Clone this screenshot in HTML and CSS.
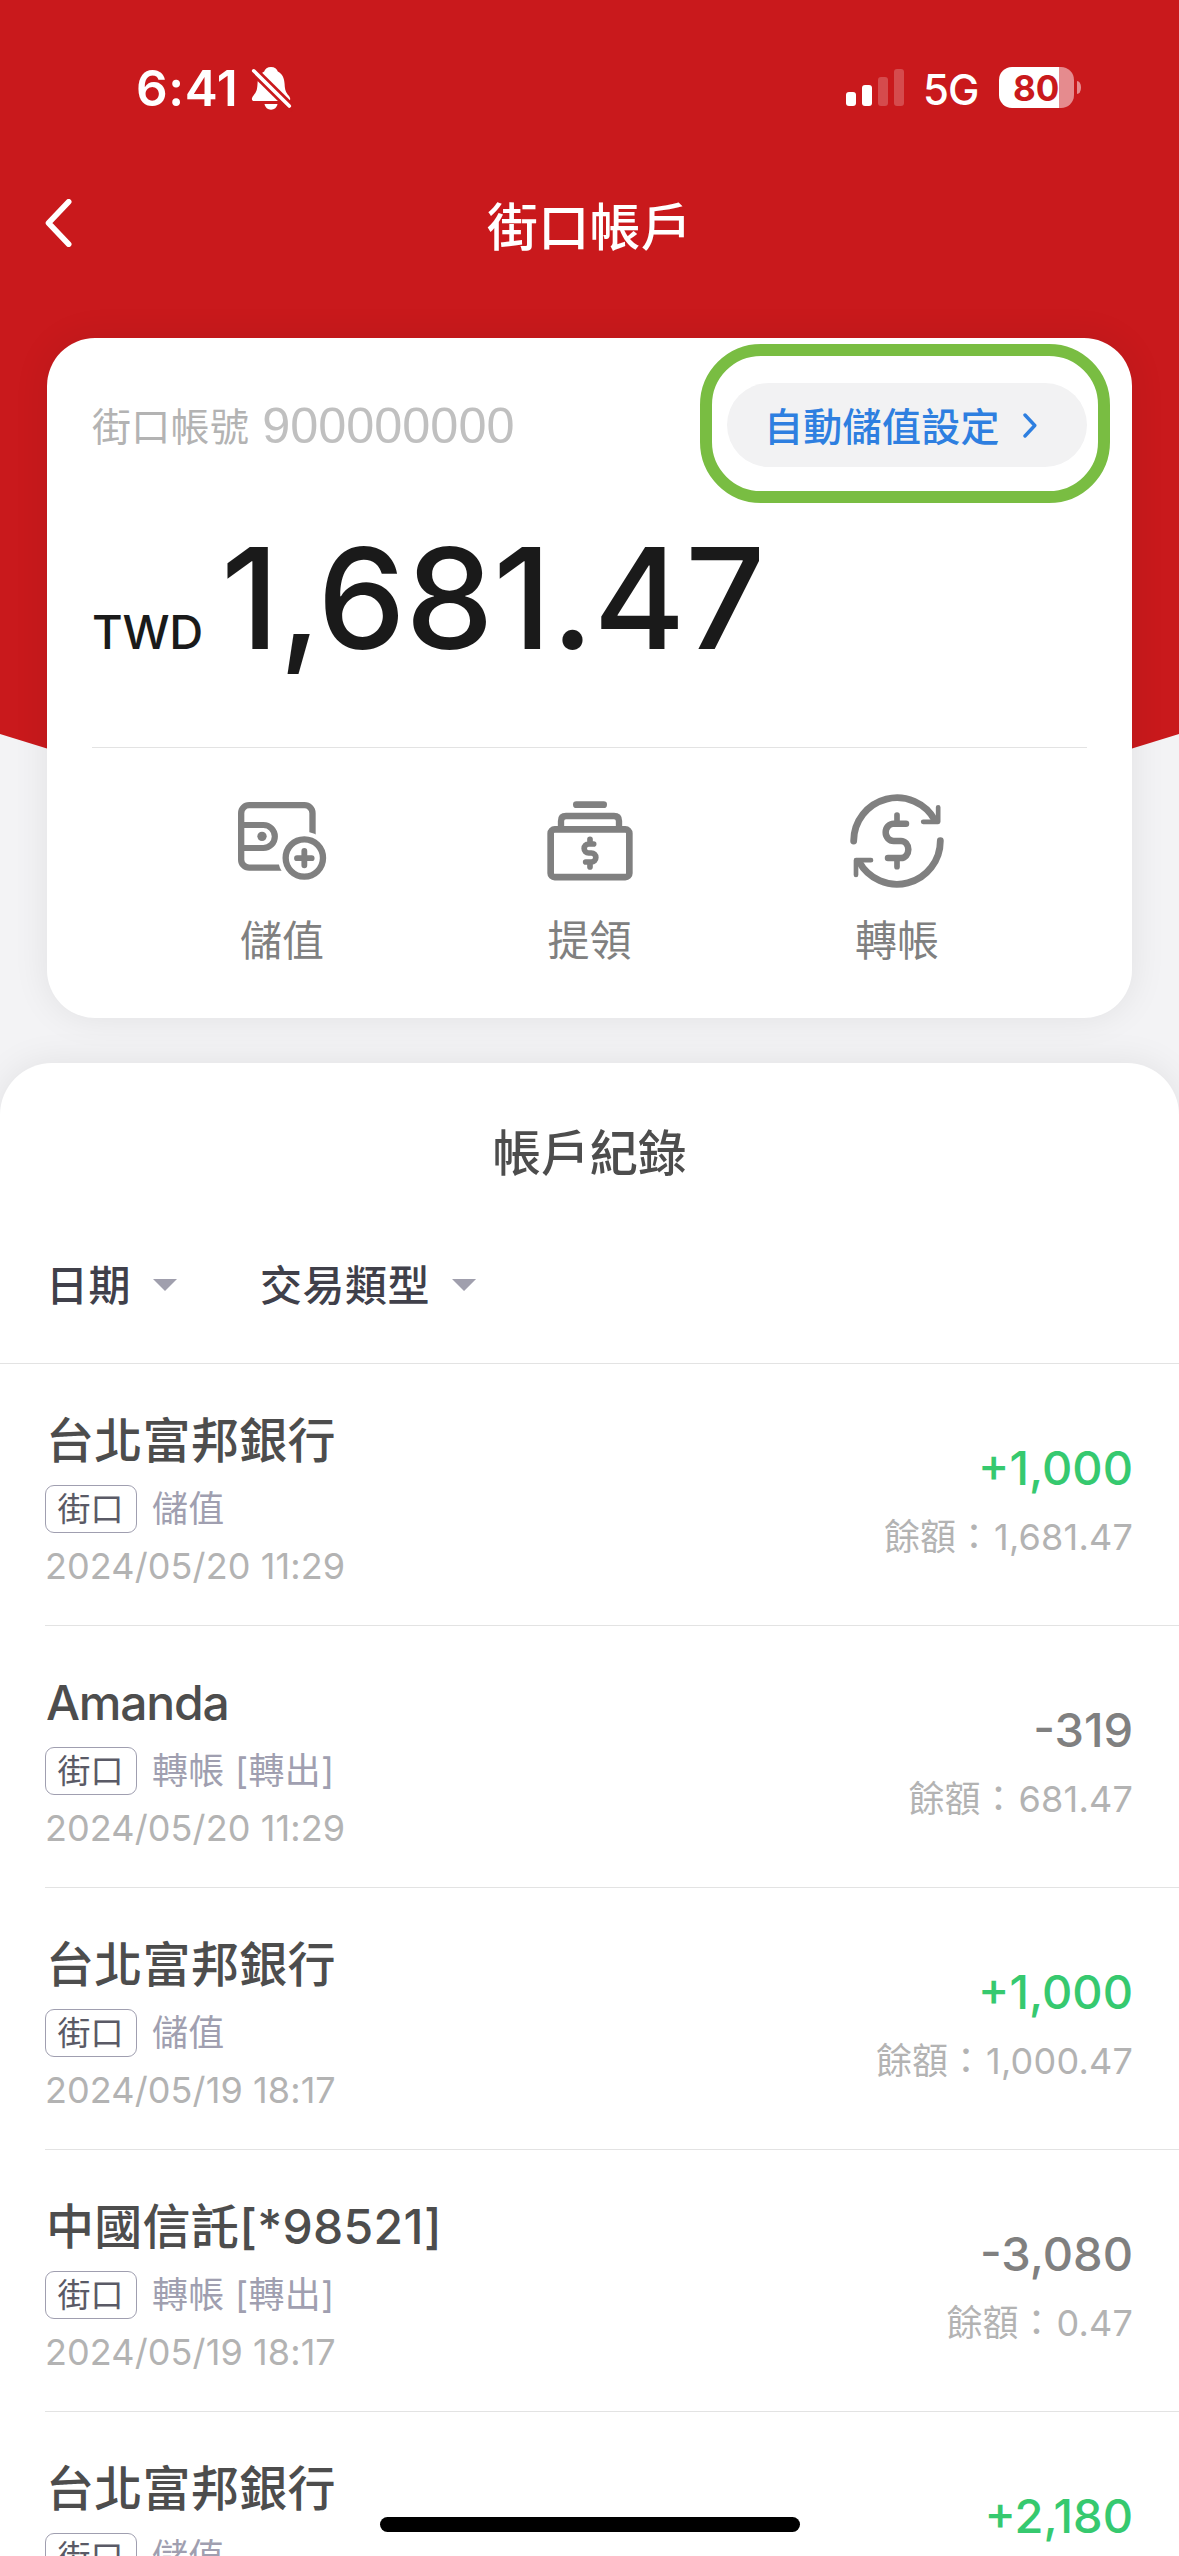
FILE: index.html
```html
<!DOCTYPE html>
<html lang="zh-Hant">
<head>
<meta charset="utf-8">
<title>街口帳戶</title>
<link rel="stylesheet" href="styles.css">
</head>
<body>
<div class="screen">
  <div class="hero"></div>

  <header class="status">
    <div class="status-left">
      <span class="time">6:41</span>
      <svg class="bell" viewBox="250 65 43 47" width="43" height="47">
        <path fill="#fff" d="M271 67c-3.600 0-6 2-6.800 4.600C259.500 74 257.800 78.500 257.500 84c-.3 6.500-1.500 8.500-4 11.500-1.300 1.600-1.700 2.700-1.600 3.700.1 1.200 1.100 1.900 2.600 1.900h33.100c1.500 0 2.500-.7 2.600-1.900.1-1-.3-2.100-1.600-3.700-2.500-3-3.700-5-4-11.500-.3-5.500-2-10-6.800-12.400C277 69 274.600 67 271 67z"/>
        <path fill="#fff" d="M264.500 104h13c-.6 3.500-3.200 5.700-6.500 5.700s-5.900-2.200-6.500-5.700z"/>
        <path stroke="#c9191c" stroke-width="9" d="M250 67.200 293 109.600"/>
        <path stroke="#fff" stroke-width="3.600" stroke-linecap="round" d="M253.700 70.800 289.300 106"/>
      </svg>
    </div>
    <div class="status-right">
      <div class="signal"><i class="bar b1"></i><i class="bar b2"></i><i class="bar b3"></i><i class="bar b4"></i></div>
      <span class="network">5G</span>
      <div class="battery"><span>80</span></div>
      <i class="battery-tip"></i>
    </div>
  </header>

  <nav class="navbar">
    <svg class="back" viewBox="45 199 27 48" width="27" height="48"><path d="M68.700 201.800 48.500 223 68.700 244.200" fill="none" stroke="#fff" stroke-width="5.600" stroke-linecap="round" stroke-linejoin="round"/></svg>
    <h1>街口帳戶</h1>
  </nav>

  <section class="card">
    <div class="account">
      <span class="account-label">街口帳號</span>
      <span class="account-number">900000000</span>
      <a class="auto">
        <span>自動儲值設定</span>
        <svg viewBox="0 0 14 25" width="14" height="25"><path d="M2 2 11.800 12.500 2 23" fill="none" stroke="#2e7fe0" stroke-width="3.400" stroke-linecap="round" stroke-linejoin="round"/></svg>
      </a>
    </div>
    <div class="balance"><span class="currency">TWD</span><span class="amount">1,681.47</span></div>
    <div class="actions">
      <div class="action">
        <svg viewBox="156 93 300 300" width="100" height="100" fill="none" stroke="#808080" stroke-linecap="round">
          <rect x="183.500" y="135.500" width="214" height="187.500" rx="24" stroke-width="19"/>
          <circle cx="373" cy="294" r="79" fill="#fff" stroke="none"/>
          <path d="M186 195H250a34.500 34.500 0 0 1 0 69H186" stroke-width="18.500"/>
          <circle cx="246" cy="229" r="14" fill="#808080" stroke="none"/>
          <circle cx="373" cy="294" r="56" stroke-width="19"/>
          <path d="M351 294.500H395M373 273V316" stroke-width="17.500"/>
        </svg>
        <span>儲值</span>
      </div>
      <div class="action">
        <svg viewBox="1080 93 300 300" width="100" height="100" fill="none" stroke="#808080" stroke-linecap="round" stroke-linejoin="round">
          <path d="M1189 134H1271" stroke-width="20"/>
          <path d="M1143 203V183q0-15 15-15H1302q15 0 15 15V203" stroke-width="19"/>
          <rect x="1112" y="208" width="236" height="143.500" rx="12" stroke-width="20"/>
          <path d="M1241 252H1226a13.500 13.500 0 0 0 0 27H1234a13.500 13.500 0 0 1 0 27H1217M1230 238V252M1230 306V321" stroke-width="17"/>
        </svg>
        <span>提領</span>
      </div>
      <div class="action">
        <svg viewBox="0 0 300 300" width="100" height="100" fill="none" stroke="#808080" stroke-linecap="round" stroke-linejoin="round">
          <path d="M20 150A130 130.500 0 0 1 264 88M280 149A130 130.500 0 0 1 36 212" stroke-width="20.500"/>
          <path d="M273.500 49V92.500H228.500M27 252V207.500H72" stroke-width="14"/>
          <path d="M177 98H140a24 26 0 0 0 0 52H162a22 25.500 0 0 1 0 51H123" stroke-width="19.500"/>
          <path d="M150 72V96M150 203V227" stroke-width="17"/>
        </svg>
        <span>轉帳</span>
      </div>
    </div>
    <div class="highlight"></div>
  </section>

  <main class="history">
    <h2>帳戶紀錄</h2>
    <div class="filters">
      <div class="filter"><span>日期</span><i class="caret"></i></div>
      <div class="filter"><span>交易類型</span><i class="caret"></i></div>
    </div>
    <ul class="records">
      <li class="record">
        <div class="info"><div class="name">台北富邦銀行</div><div class="kind"><span class="tag">街口</span><span>儲值</span></div><div class="date">2024/05/20 11:29</div></div>
        <div class="figures"><div class="change plus">+1,000</div><div class="rest">餘額：<span>1,681.47</span></div></div>
      </li>
      <li class="record">
        <div class="info"><div class="name latin">Amanda</div><div class="kind"><span class="tag">街口</span><span>轉帳 [轉出]</span></div><div class="date">2024/05/20 11:29</div></div>
        <div class="figures"><div class="change">-319</div><div class="rest">餘額：<span>681.47</span></div></div>
      </li>
      <li class="record">
        <div class="info"><div class="name">台北富邦銀行</div><div class="kind"><span class="tag">街口</span><span>儲值</span></div><div class="date">2024/05/19 18:17</div></div>
        <div class="figures"><div class="change plus">+1,000</div><div class="rest">餘額：<span>1,000.47</span></div></div>
      </li>
      <li class="record">
        <div class="info"><div class="name">中國信託[*98521]</div><div class="kind"><span class="tag">街口</span><span>轉帳 [轉出]</span></div><div class="date">2024/05/19 18:17</div></div>
        <div class="figures"><div class="change">-3,080</div><div class="rest">餘額：<span>0.47</span></div></div>
      </li>
      <li class="record">
        <div class="info"><div class="name">台北富邦銀行</div><div class="kind"><span class="tag">街口</span><span>儲值</span></div></div>
        <div class="figures"><div class="change plus">+2,180</div></div>
      </li>
    </ul>
  </main>
  <div class="home-indicator"></div>
</div>
</body>
</html>
```
FILE: styles.css
```css
* { box-sizing: border-box; margin: 0; padding: 0; }

body {
  width: 1179px;
  height: 2556px;
  overflow: hidden;
  background: #f3f3f5;
  font-family: Inter, "Noto Sans CJK TC", sans-serif;
}

.screen {
  position: relative;
  width: 1179px;
  height: 2556px;
  overflow: hidden;
}

/* red backdrop that tapers to a shallow point behind the card */
.hero {
  position: absolute;
  inset: 0 0 auto 0;
  height: 920px;
  background: #c9191c;
  clip-path: polygon(0 0, 100% 0, 100% 734px, 50% 916px, 0 734px);
}

.status {
  position: relative;
  height: 175px;
  display: flex;
  justify-content: space-between;
  padding: 65px 98px 0 136px;
  color: #fff;
}

.status-left, .status-right { display: flex; align-items: flex-start; }
.time { font-size: 49.500px; font-weight: 600; line-height: 46px; width: 114px; letter-spacing: 0.600px; }
.signal { display: flex; align-items: flex-end; gap: 6px; height: 41px; }
.bar { width: 10px; border-radius: 3px; background: #fff; }
.b1 { height: 14px; }
.b2 { height: 21px; }
.b3 { height: 29px; opacity: .22; }
.b4 { height: 37px; opacity: .22; }
.network { font-size: 42px; font-weight: 500; line-height: 49px; margin-left: 19px; width: 76px; letter-spacing: -1px; }
.battery {
  width: 75px;
  height: 41px;
  margin-top: 2px;
  border-radius: 13px;
  background: linear-gradient(90deg, #fff 60px, #e58b8e 60px);
  color: #c9191c;
  font-size: 35px;
  font-weight: 700;
  line-height: 42px;
  padding-left: 14px;
}
.battery-tip { width: 4px; height: 13px; margin: 16px 0 0 3px; border-radius: 0 4px 4px 0 / 0 6px 6px 0; background: #e58b8e; }

.navbar {
  position: relative;
  height: 163px;
  display: grid;
  grid-template-columns: 72px 1fr 72px;
}
.back { margin: 24px 0 0 45px; }
.navbar h1 { color: #fff; font-size: 51px; font-weight: 500; line-height: 60px; text-align: center; margin-top: 23px; letter-spacing: 0.300px; }

.card {
  position: relative;
  width: 1085px;
  height: 680px;
  margin: 0 auto;
  border-radius: 48px;
  background: #fff;
  box-shadow: 0 0 36px rgba(0, 0, 0, .08);
  padding: 45px 45px 0;
}
.account { display: flex; align-items: center; height: 84px; }
.account-label { font-size: 39px; color: #b3b3b3; letter-spacing: 0.300px; padding-bottom: 3px; }
.account-number { font-family: "Liberation Sans", sans-serif; font-size: 50.400px; color: #c0c0c0; margin-left: 13px; }
.auto {
  margin-left: auto;
  width: 360px;
  height: 84px;
  border-radius: 42px;
  background: #f2f2f3;
  color: #2e7fe0;
  font-size: 39px;
  letter-spacing: 0.300px;
  font-weight: 500;
  display: flex;
  align-items: center;
  padding-left: 37px;
  gap: 23px;
}
.auto span { padding-bottom: 3px; }
.highlight {
  position: absolute;
  left: 653px;
  top: 6px;
  width: 410px;
  height: 159px;
  border: 12px solid #79bd42;
  border-radius: 61px;
}
.balance {
  display: flex;
  align-items: baseline;
  height: 281px;
  color: #1a1a1a;
  border-bottom: 1px solid #e3e3e3;
  padding-top: 46px;
}
.currency { font-size: 47px; font-weight: 500; width: 129px; letter-spacing: -0.300px; }
.amount { font-size: 140px; font-weight: 500; line-height: 170px; letter-spacing: -0.200px; }
.actions { display: flex; justify-content: center; padding-top: 43px; }
.action { width: 307.500px; display: flex; flex-direction: column; align-items: center; gap: 24px; font-size: 42px; line-height: 52px; color: #808080; }

.history {
  position: relative;
  margin-top: 45px;
  height: 1493px;
  background: #fff;
  border-radius: 52px 52px 0 0;
  box-shadow: 0 0 36px rgba(0, 0, 0, .08);
}
.history h2 { height: 180px; padding-top: 61px; text-align: center; font-size: 48.500px; font-weight: 500; line-height: 60px; color: #4d4d4d; }
.filters { height: 121px; display: flex; gap: 83px; padding: 12px 0 0 46px; border-bottom: 1px solid #e3e3e3; }
.filter { display: flex; align-items: center; height: 60px; gap: 22px; font-size: 42px; font-weight: 500; color: #40404a; }
.filter span { padding-bottom: 6px; letter-spacing: 0.500px; }
.caret { width: 24px; height: 12px; background: #a09fad; clip-path: polygon(0 0, 100% 0, 50% 100%); }

.records { list-style: none; }
.record { height: 262px; margin-left: 45px; border-bottom: 1px solid #e3e3e3; display: flex; justify-content: space-between; padding-right: 46px; }
.info { padding-top: 47px; }
.name { height: 60px; line-height: 60px; padding-left: 1px; font-size: 48px; font-weight: 500; color: #4d4d4d; letter-spacing: 0.300px; }
.name.latin { letter-spacing: -1.200px; }
.kind { margin-top: 14px; display: flex; align-items: center; gap: 15px; height: 48px; font-size: 36px; line-height: 44px; color: #a09fb0; white-space: nowrap; }
.kind span + span { letter-spacing: 0.300px; }
.tag { width: 92px; height: 48px; border: 1px solid #a09fb0; border-radius: 9px; font-size: 33px; line-height: 46px; padding-right: 1px; text-align: center; color: #5a5a66; }
.date { margin-top: 11px; line-height: 44px; font-size: 36px; color: #b3b3b3; letter-spacing: 0.100px; }
.figures { padding-top: 76px; text-align: right; }
.change { font-size: 47px; font-weight: 500; line-height: 56px; color: #808080; }
.change.plus { color: #36c96f; }
.rest { margin-top: 19px; font-size: 36px; line-height: 44px; color: #b3b3b3; }
.rest span { letter-spacing: 0.200px; margin-left: 2px; }

.home-indicator {
  position: absolute;
  left: 380px;
  top: 2517px;
  width: 420px;
  height: 15px;
  border-radius: 8px;
  background: #000;
}
```
